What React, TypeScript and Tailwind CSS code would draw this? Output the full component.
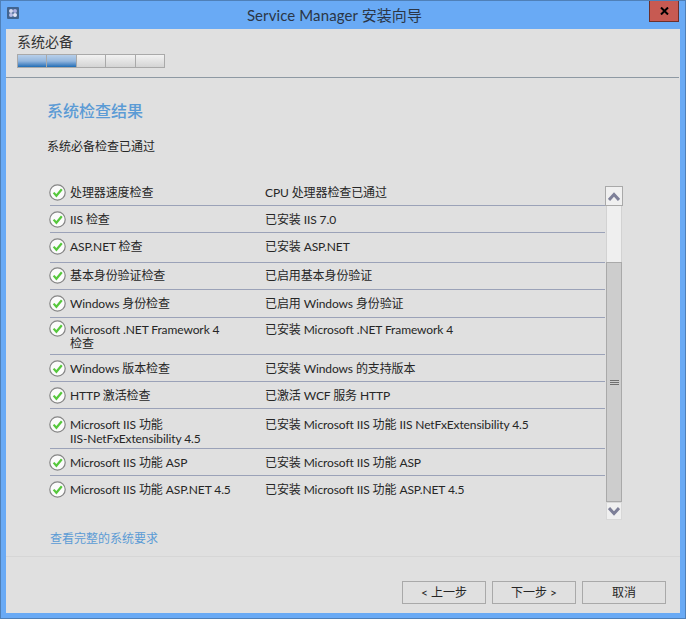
import { Fragment } from "react";

const checks = [
  { name: "处理器速度检查", result: "CPU 处理器检查已通过", h: "h-[26px]", pt: "pt-[7px]", iconPt: "pt-[5px]" },
  { name: "IIS 检查", result: "已安装 IIS 7.0", h: "h-[26px]", pt: "pt-[7px]", iconPt: "pt-[5px]" },
  { name: "ASP.NET 检查", result: "已安装 ASP.NET", h: "h-[29px]", pt: "pt-[7px]", iconPt: "pt-[5px]" },
  { name: "基本身份验证检查", result: "已启用基本身份验证", h: "h-[26px]", pt: "pt-[6px]", iconPt: "pt-[4px]" },
  { name: "Windows 身份检查", result: "已启用 Windows 身份验证", h: "h-[27px]", pt: "pt-[7px]", iconPt: "pt-[5px]" },
  { name: "Microsoft .NET Framework 4\n检查", result: "已安装 Microsoft .NET Framework 4", h: "h-[36px]", pt: "pt-[5px]", iconPt: "pt-[2px]" },
  { name: "Windows 版本检查", result: "已安装 Windows 的支持版本", h: "h-[26px]", pt: "pt-[7px]", iconPt: "pt-[5px]" },
  { name: "HTTP 激活检查", result: "已激活 WCF 服务 HTTP", h: "h-[26px]", pt: "pt-[7px]", iconPt: "pt-[5px]" },
  { name: "Microsoft IIS 功能\nIIS-NetFxExtensibility 4.5", result: "已安装 Microsoft IIS 功能 IIS NetFxExtensibility 4.5", h: "h-[39px]", pt: "pt-[9px]", iconPt: "pt-[7px]" },
  { name: "Microsoft IIS 功能 ASP", result: "已安装 Microsoft IIS 功能 ASP", h: "h-[26px]", pt: "pt-[7px]", iconPt: "pt-[5px]" },
  { name: "Microsoft IIS 功能 ASP.NET 4.5", result: "已安装 Microsoft IIS 功能 ASP.NET 4.5", h: "h-[26px]", pt: "pt-[7px]", iconPt: "pt-[5px]" },
];

const CheckIcon = () => (
  <svg width="17" height="17" viewBox="0 0 17 17" className="shrink-0">
    <circle cx="8.5" cy="8.5" r="7.7" fill="#fbfbfb" stroke="#858585" strokeWidth="1.2" />
    <path d="M4.6 8.6 L7.4 11.8 L12.8 5.2" fill="none" stroke="#56c83c" strokeWidth="2.2" />
  </svg>
);

const AppIcon = () => (
  <svg width="12" height="12" viewBox="0 0 12 12">
    <rect width="12" height="12" rx="1" fill="#41648f" />
    <circle cx="4" cy="4" r="2" fill="#d5d8f0" />
    <circle cx="8" cy="4" r="2" fill="#a9aee0" />
    <circle cx="4" cy="8" r="2" fill="#b9bde8" />
    <circle cx="8" cy="8" r="2" fill="#e3e5f6" />
  </svg>
);

const Chevron = ({ up }: { up?: boolean }) => (
  <svg width="12" height="9" viewBox="0 0 12 9">
    <path d={up ? "M1 8 L6 2.5 L11 8" : "M1 1 L6 6.5 L11 1"} fill="none" stroke="#7d7f98" strokeWidth="3" />
  </svg>
);

const Progress = () => (
  <div className="flex w-[148px] h-[14px] border border-[#a9a9a9] bg-[#a9a9a9] gap-px">
    {[0, 1].map((i) => (
      <div key={i} className="flex-1 bg-gradient-to-b from-[#b7cfea] via-[#94b7de] to-[#1c6db5]" />
    ))}
    {[2, 3, 4].map((i) => (
      <div key={i} className="flex-1 bg-gradient-to-b from-[#f2f2f2] to-[#d4d4d4]" />
    ))}
  </div>
);

const WizardButton = ({ children }: { children: React.ReactNode }) => (
  <button className="w-[84px] h-[23px] border border-[#a9a9a9] bg-[#e0e0e0] text-[12px] leading-none text-[#262626]">
    {children}
  </button>
);

export default function App() {
  return (
    <div className="w-[686px] h-[619px] flex flex-col border border-[#4f80b8] bg-[#69aaf5] font-['Lato','Noto_Sans_CJK_SC',sans-serif] overflow-hidden">
      {/* title bar */}
      <div className="relative h-[28px] shrink-0 flex items-center justify-center">
        <div className="absolute left-[6px] top-[6px]">
          <AppIcon />
        </div>
        <span className="text-[15px] tracking-[0.1px] text-[#2b3646] mr-[17px]">Service Manager 安装向导</span>
        <div className="absolute right-[6px] top-0 w-[30px] h-[21px] bg-[#c75a52] border border-[#6b2f2b] border-t-0 flex items-center justify-center">
          <svg width="9" height="8" viewBox="0 0 9 8">
            <path d="M1 0.5 L8 7.5 M8 0.5 L1 7.5" stroke="#000" strokeWidth="2" />
          </svg>
        </div>
      </div>

      <div className="mx-[5px] h-[584px] bg-[#e0e0e0] flex flex-col text-[12px] text-[#262626]">
        {/* step header */}
        <div className="h-[48px] pl-[11px] pt-[4px] shrink-0">
          <div className="text-[14px] leading-[18px] h-[21px] text-[#333]">系统必备</div>
          <Progress />
        </div>
        <div className="h-px bg-[#8e99a3] mr-px shrink-0" />

        {/* main content */}
        <div className="h-[478px] shrink-0 flex flex-col">
          <h1 className="ml-[41px] mt-[22px] text-[16px] leading-[22px] font-medium text-[#5b9bd5]">系统检查结果</h1>
          <p className="ml-[41px] mt-[16px] leading-[18px]">系统必备检查已通过</p>
          <div className="flex items-start ml-[43px] mt-[23px]">
            <div className="w-[556px] tracking-[-0.1px]">
              {checks.map((c, i) => (
                <Fragment key={c.name}>
                  <div className={`flex items-start ${c.h}`}>
                    <div className={`w-[21px] shrink-0 ${c.iconPt}`}>
                      <CheckIcon />
                    </div>
                    <div className={`w-[195px] shrink-0 leading-[14px] whitespace-pre-line ${c.pt}`}>{c.name}</div>
                    <div className={`leading-[14px] ${c.pt}`}>{c.result}</div>
                  </div>
                  {i < checks.length - 1 && <div className="h-px bg-[#9ba2b8] ml-px w-[555px]" />}
                </Fragment>
              ))}
            </div>
            <div className="mt-[7px] w-[18px] flex flex-col shrink-0">
              <div className="h-[20px] border border-[#a9a9a9] bg-[#f0f0f0] flex items-center justify-center">
                <Chevron up />
              </div>
              <div className="h-[56px] mx-px bg-[#efefef] border-x border-[#d2d2d2]" />
              <div className="h-[240px] mx-px bg-[#cdcdcd] border border-[#a9a9a9] flex items-center justify-center">
                <div className="w-[9px] flex flex-col gap-px">
                  <div className="h-px bg-[#6f6f6f]" />
                  <div className="h-px bg-[#6f6f6f]" />
                  <div className="h-px bg-[#6f6f6f]" />
                </div>
              </div>
              <div className="h-[18px] mx-px bg-[#f0f0f0] border border-[#d8d8d8] flex items-center justify-center">
                <Chevron />
              </div>
            </div>
          </div>
          <a className="ml-[44px] mt-[10px] leading-[18px] text-[#5b9bd5]">查看完整的系统要求</a>
        </div>

        {/* footer */}
        <div className="h-px bg-[#d6d6d6] shrink-0" />
        <div className="flex justify-end gap-[6px] pt-[24px] pr-[14px]">
          <WizardButton>&lt; 上一步</WizardButton>
          <WizardButton>下一步 &gt;</WizardButton>
          <WizardButton>取消</WizardButton>
        </div>
      </div>
    </div>
  );
}
